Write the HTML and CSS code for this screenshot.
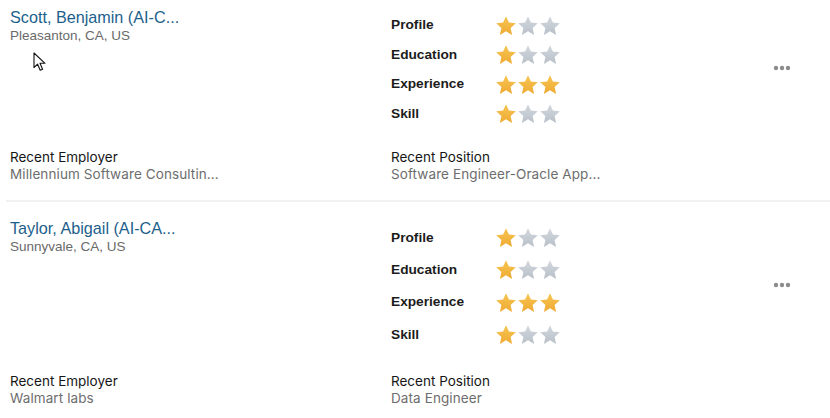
FILE: index.html
```html
<!DOCTYPE html>
<html>
<head>
<meta charset="utf-8">
<link rel="stylesheet" href="styles.css">
</head>
<body>
<svg width="0" height="0" class="defs">
  <defs>
    <linearGradient id="gold" x1="0" y1="0" x2="0" y2="1">
      <stop offset="0" stop-color="#f7c552"/>
      <stop offset="1" stop-color="#eeaa33"/>
    </linearGradient>
    <linearGradient id="grey" x1="0" y1="0" x2="0" y2="1">
      <stop offset="0" stop-color="#d3d8de"/>
      <stop offset="1" stop-color="#b9c0c8"/>
    </linearGradient>
    <symbol id="star" viewBox="0 0 20 20">
      <path d="M10 0.3 L12.9 6.6 L19.8 7.3 L14.6 11.9 L16.1 18.9 L10 15.3 L3.9 18.9 L5.4 11.9 L0.2 7.3 L7.1 6.6 Z"/>
    </symbol>
  </defs>
</svg>

<div class="list">
  <div class="card">
    <div class="top">
      <div class="who">
        <div class="name">Scott, Benjamin (AI-C...</div>
        <div class="loc">Pleasanton, CA, US</div>
      </div>
      <div class="ratings">
        <div class="rrow"><span class="rlabel">Profile</span><span class="stars"><svg class="star on"><use href="#star"/></svg><svg class="star"><use href="#star"/></svg><svg class="star"><use href="#star"/></svg></span></div>
        <div class="rrow"><span class="rlabel">Education</span><span class="stars"><svg class="star on"><use href="#star"/></svg><svg class="star"><use href="#star"/></svg><svg class="star"><use href="#star"/></svg></span></div>
        <div class="rrow"><span class="rlabel">Experience</span><span class="stars"><svg class="star on"><use href="#star"/></svg><svg class="star on"><use href="#star"/></svg><svg class="star on"><use href="#star"/></svg></span></div>
        <div class="rrow"><span class="rlabel">Skill</span><span class="stars"><svg class="star on"><use href="#star"/></svg><svg class="star"><use href="#star"/></svg><svg class="star"><use href="#star"/></svg></span></div>
      </div>
      <div class="more"><svg width="18" height="6" viewBox="0 0 18 6"><circle cx="3" cy="3" r="2.2"/><circle cx="9" cy="3" r="2.2"/><circle cx="15" cy="3" r="2.2"/></svg></div>
    </div>
    <div class="bottom">
      <div class="field"><div class="flabel">Recent Employer</div><div class="fvalue">Millennium Software Consultin...</div></div>
      <div class="field"><div class="flabel">Recent Position</div><div class="fvalue">Software Engineer-Oracle App...</div></div>
    </div>
    <svg class="cursor" width="14" height="20" viewBox="0 0 14 20"><path d="M1 1 L1 15.5 L4.6 12.2 L7.2 18.2 L9.6 17.2 L7 11.3 L12 11.3 Z" fill="#fff" stroke="#111" stroke-width="1.1" stroke-linejoin="round"/></svg>
  </div>

  <div class="card card--tall">
    <div class="top">
      <div class="who">
        <div class="name">Taylor, Abigail (AI-CA...</div>
        <div class="loc">Sunnyvale, CA, US</div>
      </div>
      <div class="ratings">
        <div class="rrow"><span class="rlabel">Profile</span><span class="stars"><svg class="star on"><use href="#star"/></svg><svg class="star"><use href="#star"/></svg><svg class="star"><use href="#star"/></svg></span></div>
        <div class="rrow"><span class="rlabel">Education</span><span class="stars"><svg class="star on"><use href="#star"/></svg><svg class="star"><use href="#star"/></svg><svg class="star"><use href="#star"/></svg></span></div>
        <div class="rrow"><span class="rlabel">Experience</span><span class="stars"><svg class="star on"><use href="#star"/></svg><svg class="star on"><use href="#star"/></svg><svg class="star on"><use href="#star"/></svg></span></div>
        <div class="rrow"><span class="rlabel">Skill</span><span class="stars"><svg class="star on"><use href="#star"/></svg><svg class="star"><use href="#star"/></svg><svg class="star"><use href="#star"/></svg></span></div>
      </div>
      <div class="more"><svg width="18" height="6" viewBox="0 0 18 6"><circle cx="3" cy="3" r="2.2"/><circle cx="9" cy="3" r="2.2"/><circle cx="15" cy="3" r="2.2"/></svg></div>
    </div>
    <div class="bottom">
      <div class="field"><div class="flabel">Recent Employer</div><div class="fvalue">Walmart labs</div></div>
      <div class="field"><div class="flabel">Recent Position</div><div class="fvalue">Data Engineer</div></div>
    </div>
  </div>
</div>
</body>
</html>
```
FILE: styles.css
```css
html, body {
  margin: 0;
  padding: 0;
  background: #fff;
  font-family: "Liberation Sans", Arial, sans-serif;
  color: #1a1a1a;
}
.defs { position: absolute; width: 0; height: 0; }
.list {
  margin-left: 6px;
}
.card {
  position: relative;
  padding: 8px 0 17px 4px;
  border-bottom: 2px solid #f2f2f2;
}
.card--tall {
  padding-top: 17px;
}
.top {
  display: grid;
  grid-template-columns: 381px 1fr auto;
  align-items: start;
}
.name {
  font-size: 16.2px;
  line-height: 19px;
  color: #1d5f8c;
}
.loc {
  font-size: 13.5px;
  line-height: 17px;
  color: #6a6a6a;
}
.ratings {
  margin-top: 2px;
  display: flex;
  flex-direction: column;
}
.rrow {
  display: flex;
  align-items: center;
  height: 29.5px;
}
.card--tall .rrow {
  height: 32.3px;
}
.rlabel {
  width: 105px;
  font-size: 13.7px;
  font-weight: bold;
  color: #1c1c1c;
}
.stars {
  display: flex;
  gap: 2px;
  margin-top: 2px;
}
.star {
  width: 20px;
  height: 20px;
  fill: url(#grey);
}
.star.on {
  fill: url(#gold);
}
.more {
  align-self: center;
  padding-right: 39px;
  display: flex;
}
.more svg { fill: #8c8c8c; }
.bottom {
  margin-top: 20px;
  display: grid;
  grid-template-columns: 381px 1fr;
}
.card--tall .bottom {
  margin-top: 22px;
}
.flabel {
  font-family: Inter, "Liberation Sans", sans-serif;
  font-size: 13.5px;
  line-height: 18px;
  color: #161616;
}
.fvalue {
  font-family: Inter, "Liberation Sans", sans-serif;
  font-size: 13.5px;
  line-height: 17px;
  color: #6d6d6d;
  letter-spacing: 0.1px;
}
.cursor {
  position: absolute;
  left: 27px;
  top: 52px;
}
```
